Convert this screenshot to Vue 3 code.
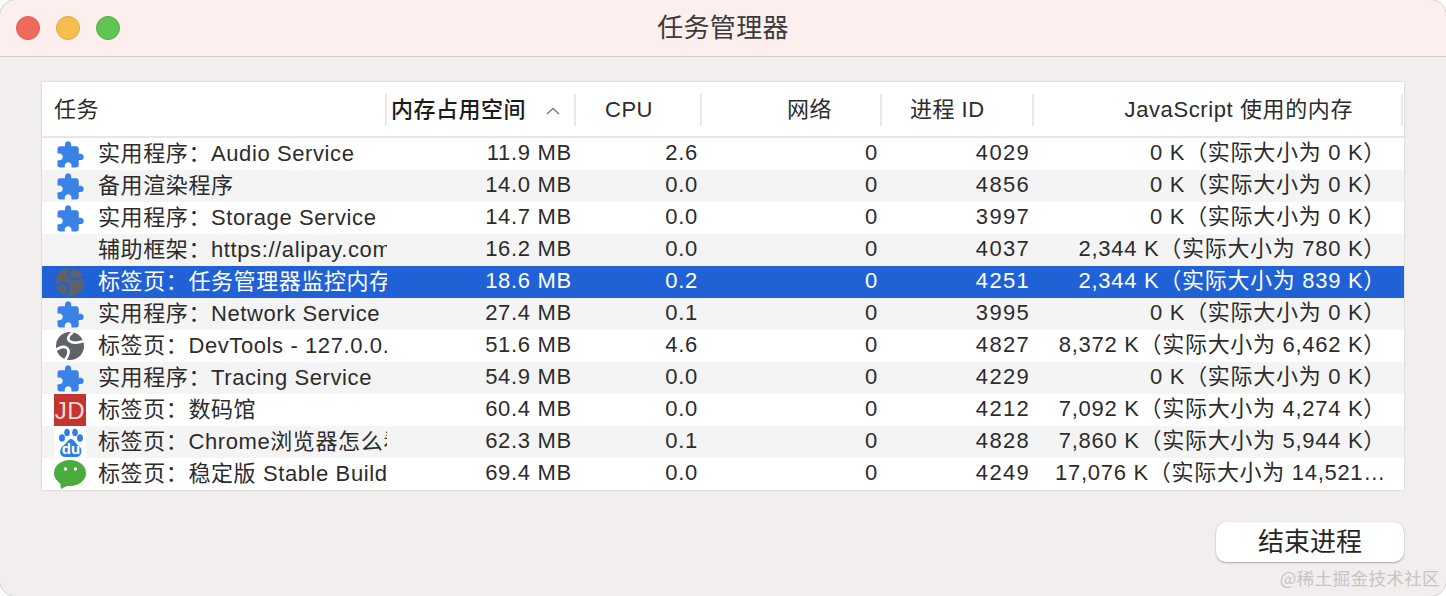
<script setup>
const columns = [
  { label: "任务", cls: "col-task" },
  { label: "内存占用空间", cls: "col-mem", sorted: true },
  { label: "CPU", cls: "col-cpu" },
  { label: "网络", cls: "col-net" },
  { label: "进程 ID", cls: "col-pid" },
  { label: "JavaScript 使用的内存", cls: "col-js" },
];

const rows = [
  { icon: "puzzle", name: "实用程序：Audio Service", mem: "11.9 MB", cpu: "2.6", pid: 4029, js: "0 K（实际大小为 0 K）" },
  { icon: "puzzle", name: "备用渲染程序", mem: "14.0 MB", cpu: "0.0", pid: 4856, js: "0 K（实际大小为 0 K）" },
  { icon: "puzzle", name: "实用程序：Storage Service", mem: "14.7 MB", cpu: "0.0", pid: 3997, js: "0 K（实际大小为 0 K）" },
  { icon: "", name: "辅助框架：https://alipay.com", mem: "16.2 MB", cpu: "0.0", pid: 4037, js: "2,344 K（实际大小为 780 K）" },
  { icon: "globe", name: "标签页：任务管理器监控内存", mem: "18.6 MB", cpu: "0.2", pid: 4251, js: "2,344 K（实际大小为 839 K）", selected: true },
  { icon: "puzzle", name: "实用程序：Network Service", mem: "27.4 MB", cpu: "0.1", pid: 3995, js: "0 K（实际大小为 0 K）" },
  { icon: "globe", name: "标签页：DevTools - 127.0.0.1", mem: "51.6 MB", cpu: "4.6", pid: 4827, js: "8,372 K（实际大小为 6,462 K）" },
  { icon: "puzzle", name: "实用程序：Tracing Service", mem: "54.9 MB", cpu: "0.0", pid: 4229, js: "0 K（实际大小为 0 K）" },
  { icon: "jd", name: "标签页：数码馆", mem: "60.4 MB", cpu: "0.0", pid: 4212, js: "7,092 K（实际大小为 4,274 K）" },
  { icon: "baidu", name: "标签页：Chrome浏览器怎么看", mem: "62.3 MB", cpu: "0.1", pid: 4828, js: "7,860 K（实际大小为 5,944 K）" },
  { icon: "wechat", name: "标签页：稳定版 Stable Build", mem: "69.4 MB", cpu: "0.0", pid: 4249, js: "17,076 K（实际大小为 14,521…" },
];
</script>

<template>
  <div class="window">
    <div class="titlebar">
      <div class="lights">
        <span class="light red"></span>
        <span class="light yellow"></span>
        <span class="light green"></span>
      </div>
      <div class="title">任务管理器</div>
    </div>

    <div class="content">
      <div class="table">
        <div class="head">
          <div v-for="col in columns" :key="col.label" class="th" :class="[col.cls, { sorted: col.sorted }]">
            <span class="th-label">{{ col.label }}</span>
            <svg v-if="col.sorted" class="caret" viewBox="0 0 14 8" width="14" height="8">
              <path d="M1 7 L7 1.5 L13 7" fill="none" stroke="#77787a" stroke-width="1.4" />
            </svg>
          </div>
        </div>

        <div v-for="(row, i) in rows" :key="row.pid" class="row" :class="{ odd: i % 2 === 1, selected: row.selected }">
          <div class="cell col-task task">
            <span class="icon">
              <svg v-if="row.icon === 'puzzle'" class="puzzle" viewBox="0 0 24 24" width="30" height="30">
                <path fill="#3b82e8" d="M20.5 11H19V7c0-1.1-.9-2-2-2h-4V3.5C13 2.12 11.88 1 10.5 1S8 2.12 8 3.5V5H4c-1.1 0-1.99.9-1.99 2v3.8H3.5c1.49 0 2.7 1.21 2.7 2.7s-1.21 2.7-2.7 2.7H2V20c0 1.1.9 2 2 2h3.8v-1.5c0-1.49 1.21-2.7 2.7-2.7 1.49 0 2.7 1.21 2.7 2.7V22H17c1.1 0 2-.9 2-2v-4h1.5c1.38 0 2.5-1.12 2.5-2.5S21.88 11 20.5 11z" />
              </svg>
              <svg v-else-if="row.icon === 'globe'" viewBox="0 0 32 32" width="32" height="32">
                <circle cx="16" cy="16" r="14" fill="#5f6368" />
                <path class="swoosh" d="M19 2 C14 6 13 9 15.500 11 C19 14 24 13 30 11" />
                <path class="swoosh" d="M2 20 C6 17 10 16 13 18 C16 21 14 26 11 30" />
              </svg>
              <svg v-else-if="row.icon === 'jd'" viewBox="0 0 32 32" width="32" height="32">
                <rect width="32" height="32" fill="#c5352f" />
                <text x="16" y="24.500" text-anchor="middle" class="jd-text">JD</text>
              </svg>
              <svg v-else-if="row.icon === 'baidu'" viewBox="0 0 32 32" width="32" height="32">
                <rect width="32" height="32" fill="#fff" />
                <ellipse cx="8" cy="12" rx="3" ry="3.800" fill="#2f7fe0" />
                <ellipse cx="13" cy="6.500" rx="2.800" ry="3.800" fill="#2f7fe0" />
                <ellipse cx="21" cy="6.500" rx="2.800" ry="3.800" fill="#2f7fe0" />
                <ellipse cx="26" cy="12" rx="3" ry="3.800" fill="#2f7fe0" />
                <path fill="#2f7fe0" d="M17 13 C20 13 21 17 25 20 C29 23 28 31 22 31 L11 31 C6 31 4 24 9 20 C13 17 14 13 17 13 Z" />
                <text x="17" y="28" text-anchor="middle" class="du-text">du</text>
              </svg>
              <svg v-else-if="row.icon === 'wechat'" viewBox="0 0 32 32" width="32" height="32">
                <ellipse cx="16" cy="15" rx="16" ry="13" fill="#49ac3c" />
                <path d="M6 24 L7 31 L15 27 Z" fill="#49ac3c" />
                <circle cx="11.500" cy="11" r="1.700" fill="#fff" />
                <circle cx="21.500" cy="11" r="1.700" fill="#fff" />
              </svg>
            </span>
            <span class="name">{{ row.name }}</span>
          </div>
          <div class="cell col-mem num">{{ row.mem }}</div>
          <div class="cell col-cpu num">{{ row.cpu }}</div>
          <div class="cell col-net num">0</div>
          <div class="cell col-pid num">{{ row.pid }}</div>
          <div class="cell col-js num">{{ row.js }}</div>
        </div>
      </div>

      <div class="actions">
        <button class="end-btn">结束进程</button>
      </div>
    </div>

    <div class="watermark">@稀土掘金技术社区</div>
  </div>
</template>

<style scoped>
.window {
  position: relative;
  width: 1446px;
  height: 596px;
  box-sizing: border-box;
  background: #f2eeee;
  border-radius: 16px;
  font-family: "Liberation Sans", "Noto Sans CJK SC", sans-serif;
  color: #2c2c2c;
}

/* corner hairline of the mac window, straight edges fall outside the page */
.window::after {
  content: "";
  position: absolute;
  inset: -1px;
  border: 1px solid #cfcccc;
  border-radius: 17px;
  pointer-events: none;
}

.titlebar {
  position: relative;
  display: flex;
  align-items: center;
  justify-content: center;
  height: 57px;
  box-sizing: border-box;
  padding-bottom: 5px;
  background: #fcefee;
  border-bottom: 1px solid #d3cfcf;
  border-radius: 16px 16px 0 0;
}

.lights {
  position: absolute;
  left: 16px;
  top: 16px;
  display: flex;
  gap: 16px;
}

.light {
  width: 24px;
  height: 24px;
  border-radius: 50%;
  box-sizing: border-box;
}

.red { background: #ee6a5f; border: 1px solid #dc5a50; }
.yellow { background: #f5bf4f; border: 1px solid #e0a83e; }
.green { background: #61c554; border: 1px solid #50ae45; }

.title {
  font-size: 26px;
  letter-spacing: 0.3px;
  color: #3a3a3a;
  font-family: "Noto Sans CJK SC", sans-serif;
}

.content {
  padding: 25px 42px 0;
}

.table {
  width: 1362px;
  background: #fff;
  box-shadow: 0 0 2px rgba(0, 0, 0, 0.2);
}

.head {
  display: flex;
  height: 56px;
  border-bottom: 2px solid #e8e6e6;
  box-sizing: border-box;
}

.th {
  position: relative;
  display: flex;
  align-items: center;
  box-sizing: border-box;
  font-size: 22px;
  letter-spacing: 0.5px;
  border-right: 2px solid #e9e9e9;
  margin: 12px 0 10px;
}

.th-label {
  display: block;
  line-height: 32px;
  margin-top: 0;
}

.th.col-task { padding-left: 12px; }
.th.col-mem { padding-left: 4px; font-weight: 500; color: #1c1c1c; }
.th.col-cpu { padding-left: 29px; }
.th.col-net { justify-content: flex-end; padding-right: 48px; }
.th.col-pid { padding-left: 28px; }
.th.col-js { justify-content: flex-end; padding-right: 48px; letter-spacing: 0.6px; }

.caret {
  position: absolute;
  left: 159px;
  top: 13px;
}

.col-task { width: 345px; }
.col-mem { width: 189px; }
.col-cpu { width: 126px; }
.col-net { width: 180px; }
.col-pid { width: 152px; }
.col-js { width: 369px; }

.row {
  display: flex;
  height: 32px;
  font-size: 22px;
  line-height: 32px;
  letter-spacing: 0.6px;
}

.row.odd { background: #f4f4f4; }

.row.selected {
  background: #2062d6;
  color: #fff;
}

.cell {
  box-sizing: border-box;
  white-space: nowrap;
  overflow: hidden;
}

.task {
  display: flex;
  align-items: center;
  padding-left: 12px;
}

.icon {
  flex: none;
  display: flex;
  align-items: center;
  width: 32px;
  height: 32px;
  margin-right: 12px;
}

.puzzle {
  margin: 2px 0 0 1px;
}

.name {
  white-space: nowrap;
}

.num {
  text-align: right;
  padding-right: 4px;
  line-height: 30px;
  letter-spacing: 0.7px;
}

.col-pid.num {
  letter-spacing: 1.3px;
}

.col-js.num {
  padding-right: 17px;
}

.swoosh {
  fill: none;
  stroke: #fff;
  stroke-width: 2.6;
}

.selected .swoosh {
  stroke: #2062d6;
}

.jd-text {
  font: 400 24px "Liberation Sans", sans-serif;
  fill: #fbdcd8;
}

.du-text {
  font: 700 15px "Liberation Sans", sans-serif;
  letter-spacing: 0;
  fill: #fff;
}

.actions {
  display: flex;
  justify-content: flex-end;
  margin-top: 32px;
}

.end-btn {
  width: 188px;
  height: 40px;
  border: none;
  border-radius: 10px;
  background: #fff;
  box-shadow: 0 1px 2px rgba(0, 0, 0, 0.28), 0 0 1px rgba(0, 0, 0, 0.2);
  font-family: "Noto Sans CJK SC", sans-serif;
  font-size: 26px;
  line-height: 36px;
  padding: 0 0 4px;
  color: #262626;
}

.watermark {
  position: absolute;
  right: 6px;
  bottom: 6px;
  font-family: "Noto Sans CJK SC", sans-serif;
  font-size: 17.5px;
  color: #c6c4c4;
  letter-spacing: 0.4px;
}
</style>

<style>
html, body {
  background: #fff;
  overflow: hidden;
}
</style>
